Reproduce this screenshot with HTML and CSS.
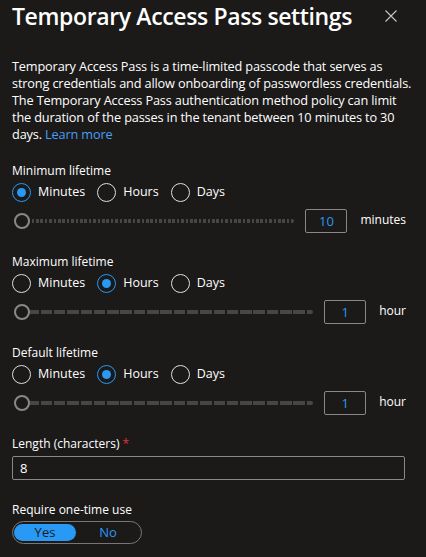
FILE: index.html
```html
<!DOCTYPE html>
<html lang="en">
<head>
<meta charset="utf-8">
<title>Temporary Access Pass settings</title>
<link rel="stylesheet" href="styles.css">
</head>
<body>
<div class="panel">
  <div class="header">
    <h1 class="title">Temporary Access Pass settings</h1>
    <button class="close" aria-label="Close">
      <svg width="12" height="12" viewBox="0 0 12 12"><path d="M0.5 0.5 L11.5 11.5 M11.5 0.5 L0.5 11.5" stroke="#c8c6c4" stroke-width="1.1" fill="none"/></svg>
    </button>
  </div>
  <p class="desc">Temporary Access Pass is a time-limited passcode that serves as<br>strong credentials and allow onboarding of passwordless credentials.<br>The Temporary Access Pass authentication method policy can limit<br>the duration of the passes in the tenant between 10 minutes to 30<br>days. <a class="link" href="#">Learn more</a></p>

  <div class="section first">
    <div class="label">Minimum lifetime</div>
    <div class="radios">
      <span class="radio checked"><span class="circle"></span>Minutes</span>
      <span class="radio"><span class="circle"></span>Hours</span>
      <span class="radio"><span class="circle"></span>Days</span>
    </div>
    <div class="slider-row">
      <div class="slider"><div class="track fine"></div><div class="thumb"></div></div>
      <div class="numbox">10</div>
      <div class="unit">minutes</div>
    </div>
  </div>

  <div class="section">
    <div class="label">Maximum lifetime</div>
    <div class="radios">
      <span class="radio"><span class="circle"></span>Minutes</span>
      <span class="radio checked"><span class="circle"></span>Hours</span>
      <span class="radio"><span class="circle"></span>Days</span>
    </div>
    <div class="slider-row">
      <div class="slider"><div class="track"></div><div class="thumb"></div></div>
      <div class="numbox">1</div>
      <div class="unit">hour</div>
    </div>
  </div>

  <div class="section">
    <div class="label">Default lifetime</div>
    <div class="radios">
      <span class="radio"><span class="circle"></span>Minutes</span>
      <span class="radio checked"><span class="circle"></span>Hours</span>
      <span class="radio"><span class="circle"></span>Days</span>
    </div>
    <div class="slider-row">
      <div class="slider"><div class="track"></div><div class="thumb"></div></div>
      <div class="numbox">1</div>
      <div class="unit">hour</div>
    </div>
  </div>

  <div class="section">
    <div class="label">Length (characters) <span class="req">*</span></div>
    <div class="textbox">8</div>
  </div>

  <div class="section last">
    <div class="label">Require one-time use</div>
    <div class="toggle">
      <span class="opt on">Yes</span>
      <span class="opt">No</span>
    </div>
  </div>
</div>
</body>
</html>
```
FILE: styles.css
```css
html, body {
  margin: 0;
  padding: 0;
  background: #1b1a19;
}
body {
  font-family: "Open Sans", "Noto Sans", sans-serif;
  color: #ffffff;
  font-size: 13px;
}
.panel {
  padding: 0 20px 0 12px;
}
.header {
  display: flex;
  align-items: flex-start;
  justify-content: space-between;
  height: 32px;
}
.title {
  margin: 0;
  font-size: 23px;
  font-weight: 600;
  line-height: 32px;
  letter-spacing: -0.37px;
}
.close {
  background: none;
  border: 0;
  padding: 0;
  margin: 10px 9px 0 0;
  width: 12px;
  height: 12px;
  display: flex;
}
.desc {
  margin: 26px -12px 0 0;
  line-height: 17px;
  font-size: 12.72px;
  letter-spacing: -0.15px;
  white-space: nowrap;
}
.link {
  color: #479ef5;
  text-decoration: none;
}
.section {
  margin-top: 19px;
}
.section.first {
  margin-top: 18px;
}
.section.last {
  margin-top: 20px;
}
.label {
  line-height: 20px;
  font-size: 12px;
}
.req {
  color: #e0343b;
}
.radios {
  display: flex;
  margin-top: 1px;
  height: 20px;
  align-items: center;
  font-size: 12.5px;
}
.radio {
  display: flex;
  align-items: center;
  margin-right: 12px;
  line-height: 20px;
}
.circle {
  box-sizing: border-box;
  width: 19px;
  height: 19px;
  border: 1px solid #e1dfdd;
  border-radius: 50%;
  margin-right: 7px;
  display: flex;
  align-items: center;
  justify-content: center;
}
.radio.checked .circle {
  border-color: #2899f5;
}
.radio.checked .circle::after {
  content: "";
  width: 9px;
  height: 9px;
  border-radius: 50%;
  background: #2899f5;
}
.slider-row {
  display: flex;
  align-items: center;
  margin-top: 7px;
  height: 24px;
}
.slider {
  flex: 1;
  position: relative;
  height: 16px;
  margin-left: 2px;
  display: flex;
  align-items: center;
}
.track {
  width: 100%;
  height: 4px;
  border-radius: 2px;
  background: repeating-linear-gradient(90deg, #484644 0 11.5px, transparent 11.5px 13.3px);
}
.track.fine {
  background: repeating-linear-gradient(90deg, #484644 0 2.6px, transparent 2.6px 4.4px);
}
.thumb {
  position: absolute;
  left: 0;
  top: 0;
  box-sizing: border-box;
  width: 16px;
  height: 16px;
  border-radius: 50%;
  border: 2px solid #8a8886;
  background: #1b1a19;
}
.numbox {
  box-sizing: border-box;
  width: 42px;
  height: 24px;
  margin-left: 11px;
  border: 1px solid #8a8886;
  border-radius: 2px;
  color: #2899f5;
  text-align: center;
  line-height: 22px;
  font-size: 13px;
}
.unit {
  margin-left: 13px;
  margin-top: -4px;
  font-size: 12px;
}
.textbox {
  box-sizing: border-box;
  margin-top: 2px;
  height: 24px;
  border: 1px solid #8a8886;
  border-radius: 2px;
  padding-left: 7px;
  line-height: 22px;
  margin-right: 1px;
}
.toggle {
  box-sizing: border-box;
  margin-top: 1px;
  width: 130px;
  height: 23px;
  border: 1px solid #797775;
  border-radius: 12px;
  display: flex;
  align-items: center;
  padding: 0 1px;
}
.opt {
  width: 62px;
  height: 17px;
  line-height: 17px;
  text-align: center;
  border-radius: 9px;
  color: #2899f5;
}
.opt:last-child {
  flex: 1;
}
.opt.on {
  background: #2899f5;
  color: #1b1a19;
}
```
